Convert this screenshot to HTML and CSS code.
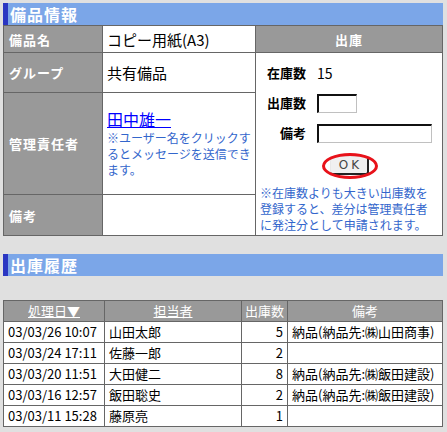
FILE: index.html
```html
<!DOCTYPE html>
<html lang="ja">
<head>
<meta charset="utf-8">
<link rel="stylesheet" href="styles.css">
</head>
<body>
<div class="page">
  <div class="sec-head">備品情報</div>
  <table class="info">
    <tr class="r1">
      <th class="lbl">備品名</th>
      <td class="val">コピー用紙(A3)</td>
      <th class="out-head">出庫</th>
    </tr>
    <tr class="r2">
      <th class="lbl">グループ</th>
      <td class="val">共有備品</td>
      <td class="out" rowspan="3">
        <div class="form">
          <span class="flbl">在庫数</span><span class="stock">15</span>
          <span class="flbl">出庫数</span><span><input class="inp qty" type="text"></span>
          <span class="flbl">備考</span><span><input class="inp note" type="text"></span>
        </div>
        <div class="btnrow">
          <span class="btnwrap"><button class="ok" type="button">OK</button><span class="ring"></span></span>
        </div>
        <p class="hint">※在庫数よりも大きい出庫数を<br>登録すると、差分は管理責任者<br>に発注分として申請されます。</p>
      </td>
    </tr>
    <tr class="r3">
      <th class="lbl">管理責任者</th>
      <td class="val mgr">
        <a class="user" href="#">田中雄一</a>
        <p class="small">※ユーザー名をクリックす<br>るとメッセージを送信でき<br>ます。</p>
      </td>
    </tr>
    <tr class="r4">
      <th class="lbl">備考</th>
      <td class="val"></td>
    </tr>
  </table>

  <div class="sec-head sec2">出庫履歴</div>
  <table class="hist">
    <tr class="hrow">
      <th class="c-date"><a href="#">処理日▼</a></th>
      <th class="c-name"><a href="#">担当者</a></th>
      <th class="c-qty">出庫数</th>
      <th class="c-memo">備考</th>
    </tr>
    <tr><td>03/03/26 10:07</td><td>山田太郎</td><td class="num">5</td><td>納品(納品先:㈱山田商事)</td></tr>
    <tr><td>03/03/24 17:11</td><td>佐藤一郎</td><td class="num">2</td><td></td></tr>
    <tr><td>03/03/20 11:51</td><td>大田健二</td><td class="num">8</td><td>納品(納品先:㈱飯田建設)</td></tr>
    <tr><td>03/03/16 12:57</td><td>飯田聡史</td><td class="num">2</td><td>納品(納品先:㈱飯田建設)</td></tr>
    <tr><td>03/03/11 15:28</td><td>藤原亮</td><td class="num">1</td><td></td></tr>
  </table>
</div>
</body>
</html>
```

FILE: styles.css
```css
html, body {
  margin: 0;
  padding: 0;
  background: #e0e0e0;
}
body {
  font-family: "Noto Sans CJK JP", "Noto Sans", sans-serif;
  color: #000;
}
.page {
  width: 440px;
  padding: 3px 0 0 3px;
}
.sec-head {
  height: 22px;
  line-height: 22px;
  background: #7ba6e8;
  border-left: 5px solid #2a36c2;
  color: #fff;
  font-weight: bold;
  font-size: 16px;
  letter-spacing: 1px;
  padding-left: 2px;
}
.sec2 {
  margin-top: 18px;
}
table {
  border-collapse: collapse;
  width: 440px;
  table-layout: fixed;
}
.info th, .info td {
  border: 1px solid #666;
  padding: 0;
}
.info .lbl {
  width: 93px;
  background: #999;
  color: #fff;
  font-size: 13px;
  font-weight: bold;
  text-align: left;
  padding-left: 5px;
  letter-spacing: 1px;
  vertical-align: middle;
}
.info .val {
  width: 148px;
  background: #fff;
  padding-left: 4px;
  font-size: 15px;
  vertical-align: middle;
}
.info .out-head {
  background: #999;
  color: #fff;
  font-size: 13px;
  font-weight: bold;
  text-align: center;
  letter-spacing: 1px;
}
.r1 th, .r1 td { height: 26px; }
.r2 th, .r2 td { height: 39px; }
.r3 th, .r3 td { height: 101px; }
.r4 th, .r4 td { height: 40px; }
.info .out {
  background: #fff;
  vertical-align: top;
  padding: 10px 0 0 0;
}
.form {
  display: grid;
  grid-template-columns: 40px auto;
  grid-template-rows: 20px 20px 20px;
  column-gap: 11px;
  row-gap: 10px;
  padding-left: 10px;
  align-items: center;
}
.flbl {
  font-size: 13px;
  font-weight: bold;
  text-align: right;
  white-space: nowrap;
  line-height: 20px;
}
.stock {
  font-size: 14px;
  line-height: 20px;
}
.inp {
  display: block;
  box-sizing: border-box;
  height: 19px;
  margin: 0;
  padding: 0;
  background: #fff;
  border-style: solid;
  border-width: 2px 1px 1px 2px;
  border-color: #111 #c0c0c0 #c0c0c0 #111;
}
.qty { width: 40px; }
.note { width: 115px; }
.btnrow {
  display: flex;
  justify-content: center;
  margin-top: 13px;
  padding-left: 1px;
}
.btnwrap {
  position: relative;
  display: inline-block;
}
.ok {
  display: block;
  box-sizing: border-box;
  width: 39px;
  height: 19px;
  margin: 0;
  padding: 0;
  background: #f0f0f0;
  border-style: solid;
  border-width: 1px 2px 2px 1px;
  border-color: #e8e8e8 #222 #222 #e8e8e8;
  border-radius: 3px;
  font-family: "DejaVu Sans", sans-serif;
  font-size: 12px;
  color: #444;
  letter-spacing: 3px;
  text-indent: 3px;
  line-height: 15px;
}
.ring {
  position: absolute;
  left: -8px;
  top: -3px;
  width: 56px;
  height: 26px;
  box-sizing: border-box;
  border: 3px solid #e8121a;
  border-radius: 50%;
}
.hint {
  margin: 10px 0 0 4px;
  font-size: 12px;
  line-height: 16px;
  color: #3366cc;
  white-space: nowrap;
}
.mgr {
  padding-top: 0;
}
.user {
  font-size: 16px;
  line-height: 18px;
  color: #0000ff;
}
.small {
  margin: 0;
  font-size: 12px;
  line-height: 16px;
  color: #3366cc;
  white-space: nowrap;
}
.hist {
  margin-top: 24px;
}
.hist th, .hist td {
  border: 1px solid #666;
  height: 20px;
  padding: 0;
  font-size: 13px;
  line-height: 20px;
  white-space: nowrap;
  overflow: hidden;
}
.hist th {
  background: #999;
  color: #fff;
  font-weight: normal;
  text-align: center;
}
.hist th a {
  color: #fff;
}
.hist td {
  background: #fff;
  padding-left: 4px;
}
.hist td.num {
  text-align: right;
  padding: 0 4px 0 0;
}
.c-date { width: 100px; }
.c-name { width: 136px; }
.c-qty { width: 45px; }
.c-memo { width: auto; }
```
